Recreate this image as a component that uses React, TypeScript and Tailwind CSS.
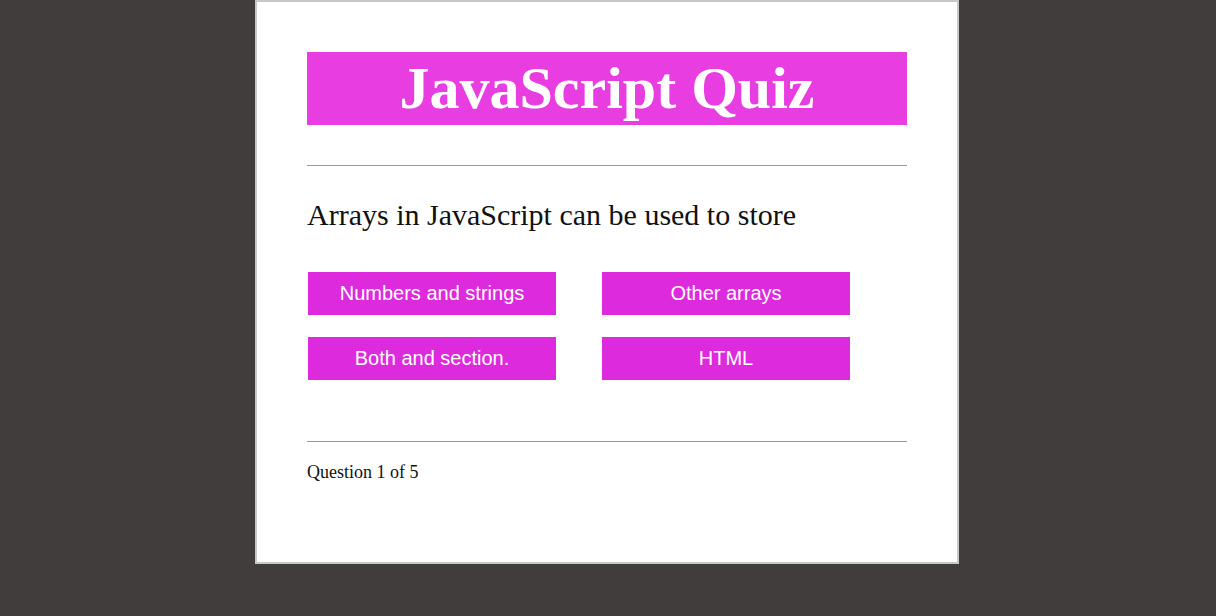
import * as React from 'react';

const answers = ['Numbers and strings', 'Other arrays', 'Both and section.', 'HTML'];

export default function App() {
  return (
    <div className="min-h-[616px] bg-[#413d3c] pl-[255px]">
      <div className="w-[704px] h-[564px] bg-white border-2 border-[#c8c8c8] px-[50px] pt-[50px] font-['Liberation_Serif',serif] text-[#111]">
        <h1 className="bg-[#e83de0] text-white text-center text-[60px] leading-[73px] font-bold">
          JavaScript Quiz
        </h1>
        <hr className="mt-[40px] border-t border-[#9a9a9a]" />
        <p className="mt-[32px] text-[30px] leading-[34px]">Arrays in JavaScript can be used to store</p>
        <div className="mt-[40px] grid grid-cols-[248px_248px] gap-x-[46px] gap-y-[22px] pl-px">
          {answers.map((a) => (
            <button
              key={a}
              className="h-[43px] bg-[#dc2adc] text-white text-[20px] leading-[23px] font-['Liberation_Sans',sans-serif]"
            >
              {a}
            </button>
          ))}
        </div>
        <hr className="mt-[61px] border-t border-[#9a9a9a]" />
        <p className="mt-[20px] text-[18px] leading-[20px]">Question 1 of 5</p>
      </div>
    </div>
  );
}
